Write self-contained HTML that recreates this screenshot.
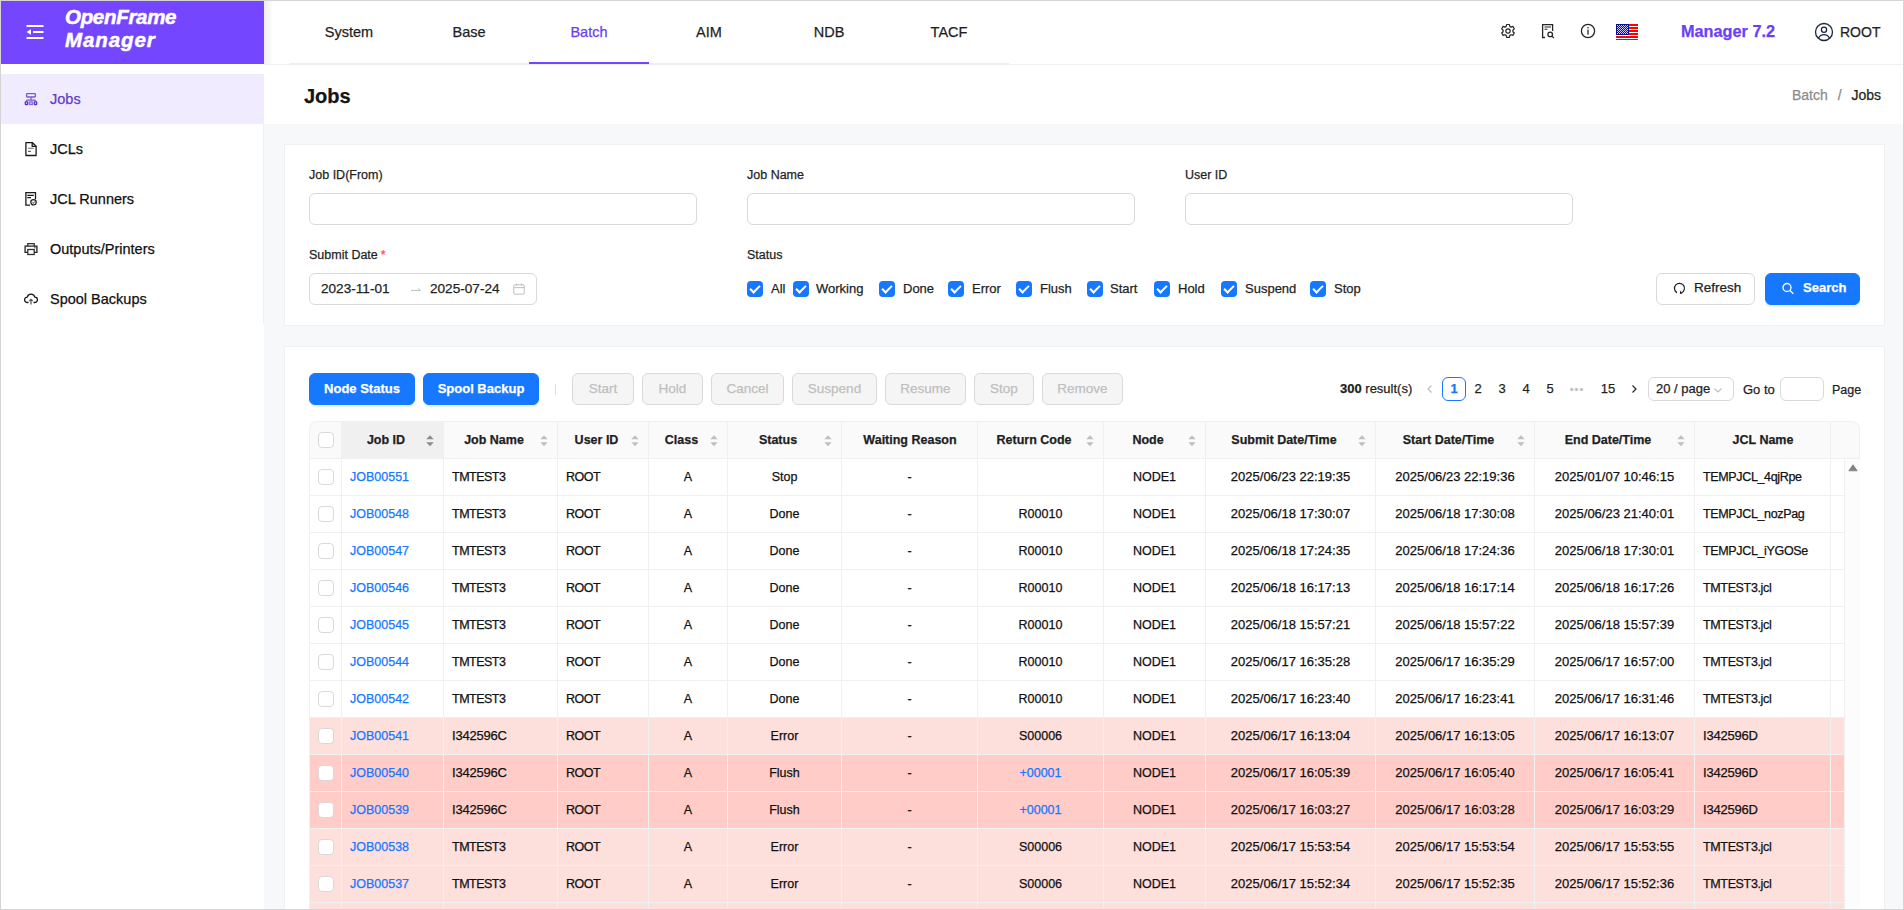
<!DOCTYPE html>
<html><head><meta charset="utf-8"><style>
*{box-sizing:border-box;margin:0;padding:0}
html,body{width:1904px;height:910px;overflow:hidden;background:#fff}
body{position:relative;font-family:"Liberation Sans",sans-serif;color:#1f1f1f;-webkit-text-stroke:0.25px currentColor}
#frame{position:absolute;left:0;top:0;width:1904px;height:910px;border:1px solid #d4d4d4;z-index:50;pointer-events:none}
.abs{position:absolute}
/* header */
#logo{position:absolute;left:1px;top:1px;width:263px;height:63px;background:#7546ff}
#hdrline{position:absolute;left:264px;top:64px;width:1639px;height:1px;background:#f0f0f0}
#shadow{position:absolute;left:264px;top:1px;width:9px;height:63px;background:linear-gradient(to right,#ededed,rgba(255,255,255,0))}
.tab{position:absolute;top:0;width:120px;height:63px;line-height:64px;text-align:center;font-size:14.5px;color:#1f1f1f}
.tab.on{color:#6a3ef0}
#tabline{position:absolute;left:289px;top:63px;width:720px;height:2px;background:#eeeeee}
#tabul{position:absolute;left:529px;top:62px;width:120px;height:2px;background:#7546ff}
/* sidebar */
#side{position:absolute;left:1px;top:65px;width:263px;height:259px}
#sideb{position:absolute;left:263px;top:74px;width:1px;height:250px;background:#f0f0f0}
.mi{position:absolute;left:0;width:262px;height:50px;font-size:14.5px;line-height:50px;color:#111}
.mi span{position:absolute;left:49px;top:0}
.mi svg{position:absolute;left:23px;top:18px}
.mi.on{background:#f0ebff;color:#5f3bcc}
/* content */
#content{position:absolute;left:264px;top:124px;width:1639px;height:786px;background:#f7f8fa}
#titlebar{position:absolute;left:264px;top:65px;width:1639px;height:59px;background:#fff}
.card{position:absolute;background:#fff;border:1px solid #eff0f1}
.lbl{position:absolute;font-size:12.5px;color:#1f1f1f;line-height:16px}
.inp{position:absolute;height:32px;border:1px solid #d9d9d9;border-radius:6px;background:#fff}
.cbx{position:absolute;width:16px;height:16px;border-radius:4px;background:#1677ff}
.cbx:after{content:"";position:absolute;left:5px;top:2px;width:4px;height:8px;border:solid #fff;border-width:0 2px 2px 0;transform:rotate(45deg)}
.cl{position:absolute;font-size:13px;line-height:16px;color:#1f1f1f}
.btn{position:absolute;height:32px;border-radius:6px;font-size:13px;line-height:30px;text-align:center}
.btn.pri{background:#1677ff;color:#fff;border:1px solid #1677ff;font-weight:bold;box-shadow:0 2px 0 rgba(5,145,255,.1)}
.btn.def{background:#fff;border:1px solid #d9d9d9;color:#1f1f1f}
.btn.dis{background:#f5f5f5;border:1px solid #d9d9d9;color:#bfbfbf;font-size:13.5px}
.pg{position:absolute;top:377px;height:24px;line-height:24px;font-size:13px;text-align:center;color:#1f1f1f}
/* table */
.thead,.tr{position:absolute;left:309px;height:38px;width:1550px}
.tr{height:37px;width:1535px}
.th{position:absolute;top:0;height:38px;background:#fafafa;border-left:1px solid #f0f0f0;border-top:1px solid #f0f0f0;border-bottom:1px solid #f0f0f0;font-weight:bold;font-size:12.5px}
.th.sorted{background:#f0f0f0}
.th .tt{position:absolute;left:9px;right:22px;top:0;line-height:36px;text-align:center;white-space:nowrap}
.th .tt.nos{right:8px}
.th .sorter{position:absolute;right:9px;top:13px}
.th.first{border-top-left-radius:8px}
.th.last{border-right:1px solid #f0f0f0;border-top-right-radius:8px}
.th .cb{position:absolute;left:8px;top:10px}
.td{position:absolute;top:0;height:37px;color:#111;border-left:1px solid #f0f0f0;border-bottom:1px solid #f0f0f0;font-size:12.5px;line-height:36px;white-space:nowrap;overflow:hidden}
.td.l{padding-left:8px}
.td.dt{font-size:13px}
.td.nm{letter-spacing:-0.5px}
.td.jn{letter-spacing:-0.35px}
.td.dg{font-size:13px;letter-spacing:-0.2px}
.td.c{text-align:center}
.td .cb{position:absolute;left:8px;top:10px}
.cb{display:inline-block;width:16px;height:16px;border:1px solid #d9d9d9;border-radius:4px;background:#fff}
.lnk{color:#1677ff}
.tr.err{background:#fddfdb}
.tr.flush{background:#ffccc7}
.tr.err .td,.tr.flush .td{border-color:#f0f0f0}
#sb{position:absolute;left:1844px;top:459px;width:16px;height:452px;background:#fcfcfc;border-left:1px solid #f0f0f0}

</style></head><body>
<div id="frame"></div>
<!-- header -->
<div id="logo">
  <svg class="abs" style="left:25px;top:23px" width="18" height="16" viewBox="0 0 18 16">
    <rect x="0.5" y="1" width="17" height="2" fill="#fff"/>
    <path d="M0.5 8 L5 5.3 L5 10.7 Z" fill="#fff"/>
    <rect x="7" y="7" width="10.5" height="2" fill="#fff"/>
    <rect x="0.5" y="13" width="17" height="2" fill="#fff"/>
  </svg>
  <div class="abs" style="left:64px;top:5.4px;color:#fff;font-weight:bold;font-style:italic;font-size:20.5px;line-height:22.7px;-webkit-text-stroke:0.5px #fff"><span style="letter-spacing:-0.3px">OpenFrame</span><br><span style="letter-spacing:0.9px">Manager</span></div>
</div>
<div id="shadow"></div>
<div id="hdrline"></div>
<div class="tab" style="left:289px">System</div>
<div class="tab" style="left:409px">Base</div>
<div class="tab on" style="left:529px">Batch</div>
<div class="tab" style="left:649px">AIM</div>
<div class="tab" style="left:769px">NDB</div>
<div class="tab" style="left:889px">TACF</div>
<div id="tabline"></div>
<div id="tabul"></div>

<!-- header right icons -->
<svg class="abs" style="left:1500px;top:23px" width="16" height="16" viewBox="0 0 16 16">
  <path d="M6.6 1.5h2.8l.4 1.9 1.3.7 1.8-.7 1.4 2.4-1.4 1.3v1.6l1.4 1.3-1.4 2.4-1.8-.7-1.3.7-.4 1.9H6.6l-.4-1.9-1.3-.7-1.8.7-1.4-2.4 1.4-1.3V7.1L1.7 5.8l1.4-2.4 1.8.7 1.3-.7z" fill="none" stroke="#262626" stroke-width="1.2" stroke-linejoin="round"/>
  <circle cx="8" cy="8" r="2.2" fill="none" stroke="#262626" stroke-width="1.2"/>
</svg>
<svg class="abs" style="left:1540px;top:23px" width="16" height="16" viewBox="0 0 16 16">
  <path d="M5 14.5H2.6V1.6h10v6.3" fill="none" stroke="#262626" stroke-width="1.3"/>
  <path d="M4.5 4h6.5M4.5 6.2h3" stroke="#262626" stroke-width="1.1"/>
  <circle cx="10.2" cy="11.4" r="2.3" fill="none" stroke="#262626" stroke-width="1.3"/>
  <path d="M11.9 13.1l2 2" stroke="#262626" stroke-width="1.3"/>
</svg>
<svg class="abs" style="left:1580px;top:23px" width="16" height="16" viewBox="0 0 16 16">
  <circle cx="8" cy="8" r="6.6" fill="none" stroke="#262626" stroke-width="1.3"/>
  <rect x="7.35" y="6.6" width="1.3" height="5" fill="#262626"/>
  <circle cx="8" cy="4.7" r="0.8" fill="#262626"/>
</svg>
<svg class="abs" style="left:1616px;top:24px" width="22" height="16" viewBox="0 0 22 16" shape-rendering="crispEdges"><rect x="0" y="0" width="22" height="16" fill="#fff"/><rect x="0" y="0" width="22" height="2" fill="#f00"/><rect x="0" y="3" width="22" height="2" fill="#f00"/><rect x="0" y="6" width="22" height="2" fill="#f00"/><rect x="0" y="9" width="22" height="2" fill="#f00"/><rect x="0" y="12" width="22" height="2" fill="#f00"/><rect x="0" y="15" width="22" height="1" fill="#f00"/><rect x="0" y="0" width="13" height="11" fill="#0c0c94"/><rect x="1" y="1" width="1" height="1" fill="#c8c8f0"/><rect x="3" y="1" width="1" height="1" fill="#c8c8f0"/><rect x="5" y="1" width="1" height="1" fill="#c8c8f0"/><rect x="7" y="1" width="1" height="1" fill="#c8c8f0"/><rect x="9" y="1" width="1" height="1" fill="#c8c8f0"/><rect x="11" y="1" width="1" height="1" fill="#c8c8f0"/><rect x="2" y="2" width="1" height="1" fill="#c8c8f0"/><rect x="4" y="2" width="1" height="1" fill="#c8c8f0"/><rect x="6" y="2" width="1" height="1" fill="#c8c8f0"/><rect x="8" y="2" width="1" height="1" fill="#c8c8f0"/><rect x="10" y="2" width="1" height="1" fill="#c8c8f0"/><rect x="1" y="3" width="1" height="1" fill="#c8c8f0"/><rect x="3" y="3" width="1" height="1" fill="#c8c8f0"/><rect x="5" y="3" width="1" height="1" fill="#c8c8f0"/><rect x="7" y="3" width="1" height="1" fill="#c8c8f0"/><rect x="9" y="3" width="1" height="1" fill="#c8c8f0"/><rect x="11" y="3" width="1" height="1" fill="#c8c8f0"/><rect x="2" y="4" width="1" height="1" fill="#c8c8f0"/><rect x="4" y="4" width="1" height="1" fill="#c8c8f0"/><rect x="6" y="4" width="1" height="1" fill="#c8c8f0"/><rect x="8" y="4" width="1" height="1" fill="#c8c8f0"/><rect x="10" y="4" width="1" height="1" fill="#c8c8f0"/><rect x="1" y="5" width="1" height="1" fill="#c8c8f0"/><rect x="3" y="5" width="1" height="1" fill="#c8c8f0"/><rect x="5" y="5" width="1" height="1" fill="#c8c8f0"/><rect x="7" y="5" width="1" height="1" fill="#c8c8f0"/><rect x="9" y="5" width="1" height="1" fill="#c8c8f0"/><rect x="11" y="5" width="1" height="1" fill="#c8c8f0"/><rect x="2" y="6" width="1" height="1" fill="#c8c8f0"/><rect x="4" y="6" width="1" height="1" fill="#c8c8f0"/><rect x="6" y="6" width="1" height="1" fill="#c8c8f0"/><rect x="8" y="6" width="1" height="1" fill="#c8c8f0"/><rect x="10" y="6" width="1" height="1" fill="#c8c8f0"/><rect x="1" y="7" width="1" height="1" fill="#c8c8f0"/><rect x="3" y="7" width="1" height="1" fill="#c8c8f0"/><rect x="5" y="7" width="1" height="1" fill="#c8c8f0"/><rect x="7" y="7" width="1" height="1" fill="#c8c8f0"/><rect x="9" y="7" width="1" height="1" fill="#c8c8f0"/><rect x="11" y="7" width="1" height="1" fill="#c8c8f0"/><rect x="2" y="8" width="1" height="1" fill="#c8c8f0"/><rect x="4" y="8" width="1" height="1" fill="#c8c8f0"/><rect x="6" y="8" width="1" height="1" fill="#c8c8f0"/><rect x="8" y="8" width="1" height="1" fill="#c8c8f0"/><rect x="10" y="8" width="1" height="1" fill="#c8c8f0"/><rect x="1" y="9" width="1" height="1" fill="#c8c8f0"/><rect x="3" y="9" width="1" height="1" fill="#c8c8f0"/><rect x="5" y="9" width="1" height="1" fill="#c8c8f0"/><rect x="7" y="9" width="1" height="1" fill="#c8c8f0"/><rect x="9" y="9" width="1" height="1" fill="#c8c8f0"/><rect x="11" y="9" width="1" height="1" fill="#c8c8f0"/></svg>
<div class="abs" style="left:1681px;top:21px;font-size:16.3px;line-height:20px;font-weight:bold;color:#6b3ff5">Manager 7.2</div>
<svg class="abs" style="left:1814px;top:22px" width="20" height="20" viewBox="0 0 20 20">
  <circle cx="10" cy="10" r="8.5" fill="none" stroke="#1c2541" stroke-width="1.3"/>
  <circle cx="10" cy="7.8" r="2.6" fill="none" stroke="#1c2541" stroke-width="1.3"/>
  <path d="M4.6 16.2c1-2.4 3-3.6 5.4-3.6s4.4 1.2 5.4 3.6" fill="none" stroke="#1c2541" stroke-width="1.3"/>
</svg>
<div class="abs" style="left:1840px;top:24px;font-size:14px;line-height:16px;color:#1f1f1f">ROOT</div>

<!-- sidebar -->
<div id="side">
  <div class="mi on" style="top:9px">
    <svg width="16" height="16" viewBox="0 0 16 16" style="top:17px">
      <rect x="2.6" y="2.7" width="8.8" height="3.3" rx="0.7" fill="none" stroke="#7a58d6" stroke-width="1.3"/>
      <path d="M7 6v3M2.5 9.2h9M2.5 9.2v1.4M11.5 9.2v1.4" stroke="#7a58d6" stroke-width="1.2" fill="none"/>
      <path d="M5 4.3h4.6" stroke="#fff" stroke-width="1" opacity="0.7"/>
      <rect x="1.3" y="10.9" width="2.5" height="2.6" rx="0.4" fill="none" stroke="#5530c4" stroke-width="1.3"/>
      <rect x="5.75" y="10.9" width="2.5" height="2.6" fill="none" stroke="#8a6ad8" stroke-width="1.3"/>
      <rect x="10.2" y="10.9" width="2.5" height="2.6" rx="0.4" fill="none" stroke="#5530c4" stroke-width="1.3"/>
    </svg>
    <span>Jobs</span>
  </div>
  <div class="mi" style="top:59px">
    <svg width="16" height="16" viewBox="0 0 16 16" style="top:17px">
      <path d="M1.9 1.7h6.6l3.6 3.6v9.2H1.9z" fill="none" stroke="#1a1a1a" stroke-width="1.3" stroke-linejoin="round"/>
      <path d="M8.2 1.7v3.6h3.9" fill="none" stroke="#1a1a1a" stroke-width="1.3"/>
      <path d="M4.2 7.3h5.5M4 10.4h3" stroke="#666" stroke-width="1.1"/>
    </svg>
    <span>JCLs</span>
  </div>
  <div class="mi" style="top:109px">
    <svg width="16" height="16" viewBox="0 0 16 16" style="top:17px">
      <path d="M6 14.2H1.9V1.7h9.6v6.5" fill="none" stroke="#1a1a1a" stroke-width="1.3"/>
      <path d="M3.3 4.4h6.5M3.3 6.6h3.7" stroke="#1a1a1a" stroke-width="1.1"/>
      <circle cx="9.5" cy="11.3" r="2.7" fill="none" stroke="#1a1a1a" stroke-width="1.2"/>
      <path d="M8.2 11.4l1 1 1.6-1.9" fill="none" stroke="#333" stroke-width="1"/>
    </svg>
    <span>JCL Runners</span>
  </div>
  <div class="mi" style="top:159px">
    <svg width="16" height="16" viewBox="0 0 16 16" style="top:17px">
      <path d="M3.8 5.3V2.6h6.4v2.7" fill="none" stroke="#333" stroke-width="1.3"/>
      <path d="M3.8 11.3H1.1V5.2h11.8v6.1h-2.7" fill="none" stroke="#222" stroke-width="1.3"/>
      <rect x="3.8" y="8.5" width="6.4" height="5" fill="none" stroke="#333" stroke-width="1.3"/>
      <circle cx="10.9" cy="6.8" r="0.7" fill="#333"/>
    </svg>
    <span>Outputs/Printers</span>
  </div>
  <div class="mi" style="top:209px">
    <svg width="16" height="16" viewBox="0 0 16 16" style="top:17px">
      <path d="M4 11.5H3.4A2.7 2.7 0 0 1 3.2 6.1 3.9 3.9 0 0 1 10.8 6.1 2.7 2.7 0 0 1 10.6 11.5H10" fill="none" stroke="#1a1a1a" stroke-width="1.3" stroke-linecap="round"/>
      <path d="M7 8.3v5.3M5.3 10l1.7-1.7 1.7 1.7" fill="none" stroke="#555" stroke-width="1.2"/>
    </svg>
    <span>Spool Backups</span>
  </div>
</div>
<div id="sideb"></div>
<!-- content -->
<div id="titlebar">
  <div class="abs" style="left:40px;top:19px;font-size:20px;line-height:24px;font-weight:bold;color:#141414">Jobs</div>
  <div class="abs" style="right:22px;top:22px;font-size:14px;line-height:16px;color:#8c8c8c;white-space:nowrap">Batch <span style="margin:0 6px">/</span> <span style="color:#1f1f1f">Jobs</span></div>
</div>
<div id="content"></div>

<!-- search card -->
<div class="card" style="left:284px;top:144px;width:1601px;height:182px"></div>
<div class="lbl" style="left:309px;top:167px">Job ID(From)</div>
<div class="lbl" style="left:747px;top:167px">Job Name</div>
<div class="lbl" style="left:1185px;top:167px">User ID</div>
<div class="inp" style="left:309px;top:193px;width:388px"></div>
<div class="inp" style="left:747px;top:193px;width:388px"></div>
<div class="inp" style="left:1185px;top:193px;width:388px"></div>
<div class="lbl" style="left:309px;top:247px">Submit Date<span style="color:#ff4d4f;margin-left:3px">*</span></div>
<div class="lbl" style="left:747px;top:247px">Status</div>
<div class="inp" style="left:309px;top:273px;width:228px">
  <div class="abs" style="left:11px;top:7px;font-size:13.6px;line-height:16px;color:#1f1f1f">2023-11-01</div>
  <svg class="abs" style="left:99px;top:9px" width="14" height="12" viewBox="0 0 14 12"><path d="M2 7.5h9.5l-2.3-2" fill="none" stroke="#bfbfbf" stroke-width="1"/></svg>
  <div class="abs" style="left:120px;top:7px;font-size:13.6px;line-height:16px;color:#1f1f1f">2025-07-24</div>
  <svg class="abs" style="left:203px;top:9px" width="12" height="12" viewBox="0 0 12 12"><rect x="0.8" y="1.8" width="10.4" height="9.4" rx="0.6" fill="none" stroke="#bfbfbf" stroke-width="1"/><path d="M0.8 4.6h10.4M3.5 0.5v2.3M8.5 0.5v2.3" stroke="#bfbfbf" stroke-width="1"/></svg>
</div>
<div class="cbx" style="left:747px;top:281px"></div><div class="cl" style="left:771px;top:281px">All</div>
<div class="cbx" style="left:793px;top:281px"></div><div class="cl" style="left:816px;top:281px">Working</div>
<div class="cbx" style="left:879px;top:281px"></div><div class="cl" style="left:903px;top:281px">Done</div>
<div class="cbx" style="left:948px;top:281px"></div><div class="cl" style="left:972px;top:281px">Error</div>
<div class="cbx" style="left:1016px;top:281px"></div><div class="cl" style="left:1040px;top:281px">Flush</div>
<div class="cbx" style="left:1087px;top:281px"></div><div class="cl" style="left:1110px;top:281px">Start</div>
<div class="cbx" style="left:1154px;top:281px"></div><div class="cl" style="left:1178px;top:281px">Hold</div>
<div class="cbx" style="left:1221px;top:281px"></div><div class="cl" style="left:1245px;top:281px">Suspend</div>
<div class="cbx" style="left:1310px;top:281px"></div><div class="cl" style="left:1334px;top:281px">Stop</div>
<div class="btn def" style="left:1656px;top:273px;width:99px">
  <svg class="abs" style="left:15px;top:8px" width="14" height="14" viewBox="0 0 14 14"><path d="M5 10.63A5 5 0 1 1 9.4 10.9" fill="none" stroke="#1f1f1f" stroke-width="1.2"/><path d="M8.2 8.6L10.4 11.4 7.9 12Z" fill="#1f1f1f"/></svg>
  <span class="abs" style="left:37px;top:-1px;font-size:13.5px">Refresh</span>
</div>
<div class="btn pri" style="left:1765px;top:273px;width:95px">
  <svg class="abs" style="left:15px;top:8px" width="14" height="14" viewBox="0 0 14 14"><circle cx="6" cy="5.5" r="4" fill="none" stroke="#fff" stroke-width="1.3"/><path d="M8.9 8.4l3.4 3.4" stroke="#fff" stroke-width="1.3"/></svg>
  <span class="abs" style="left:37px;top:-1px;font-size:13px">Search</span>
</div>

<!-- table card -->
<div class="card" style="left:284px;top:346px;width:1601px;height:600px"></div>
<div class="btn pri" style="left:309px;top:373px;width:106px">Node Status</div>
<div class="btn pri" style="left:423px;top:373px;width:116px">Spool Backup</div>
<div class="abs" style="left:555px;top:384px;width:1px;height:11px;background:#e0e0e0"></div>
<div class="btn dis" style="left:572px;top:373px;width:62px">Start</div>
<div class="btn dis" style="left:642px;top:373px;width:61px">Hold</div>
<div class="btn dis" style="left:711px;top:373px;width:73px">Cancel</div>
<div class="btn dis" style="left:792px;top:373px;width:85px">Suspend</div>
<div class="btn dis" style="left:885px;top:373px;width:81px">Resume</div>
<div class="btn dis" style="left:974px;top:373px;width:60px">Stop</div>
<div class="btn dis" style="left:1042px;top:373px;width:81px">Remove</div>

<div class="abs" style="left:1340px;top:381px;font-size:13px;line-height:16px;white-space:nowrap"><b>300</b> result(s)</div>
<svg class="abs" style="left:1425px;top:384px" width="10" height="10" viewBox="0 0 10 10"><path d="M6.5 1.5L3 5l3.5 3.5" fill="none" stroke="#bfbfbf" stroke-width="1.2"/></svg>
<div class="pg" style="left:1442px;width:24px;border:1px solid #1677ff;border-radius:6px;color:#1677ff;font-weight:bold;line-height:22px">1</div>
<div class="pg" style="left:1466px;width:24px">2</div>
<div class="pg" style="left:1490px;width:24px">3</div>
<div class="pg" style="left:1514px;width:24px">4</div>
<div class="pg" style="left:1538px;width:24px">5</div>
<div class="pg" style="left:1565px;width:24px;color:#bfbfbf;letter-spacing:1px;font-size:11px">•••</div>
<div class="pg" style="left:1596px;width:24px">15</div>
<svg class="abs" style="left:1629px;top:384px" width="10" height="10" viewBox="0 0 10 10"><path d="M3.5 1.5L7 5 3.5 8.5" fill="none" stroke="#262626" stroke-width="1.2"/></svg>
<div class="abs" style="left:1648px;top:377px;width:86px;height:24px;border:1px solid #d9d9d9;border-radius:6px">
  <span class="abs" style="left:7px;top:3px;font-size:13px;line-height:16px;white-space:nowrap">20 / page</span>
  <svg class="abs" style="left:64px;top:7px" width="10" height="10" viewBox="0 0 10 10"><path d="M1.5 3.5L5 7l3.5-3.5" fill="none" stroke="#bfbfbf" stroke-width="1.1"/></svg>
</div>
<div class="abs" style="left:1743px;top:382px;font-size:13px;line-height:16px">Go to</div>
<div class="abs" style="left:1780px;top:377px;width:44px;height:24px;border:1px solid #d9d9d9;border-radius:6px"></div>
<div class="abs" style="left:1832px;top:382px;font-size:12.5px;line-height:16px">Page</div>

<div class="thead" style="top:421px">
<div class="th first" style="left:0px;width:32px"><span class="cb"></span></div>
<div class="th sorted" style="left:32px;width:102px"><span class="tt">Job ID</span><svg class="sorter" width="8" height="12" viewBox="0 0 8 12"><path d="M4 0.3 L7.7 4.2 L0.3 4.2 Z" fill="#8c8c8c"/><path d="M0.3 7.3 L7.7 7.3 L4 11.3 Z" fill="#8c8c8c"/></svg></div>
<div class="th" style="left:134px;width:114px"><span class="tt">Job Name</span><svg class="sorter" width="8" height="12" viewBox="0 0 8 12"><path d="M4 0.3 L7.7 4.2 L0.3 4.2 Z" fill="#bfbfbf"/><path d="M0.3 7.3 L7.7 7.3 L4 11.3 Z" fill="#bfbfbf"/></svg></div>
<div class="th" style="left:248px;width:91px"><span class="tt">User ID</span><svg class="sorter" width="8" height="12" viewBox="0 0 8 12"><path d="M4 0.3 L7.7 4.2 L0.3 4.2 Z" fill="#bfbfbf"/><path d="M0.3 7.3 L7.7 7.3 L4 11.3 Z" fill="#bfbfbf"/></svg></div>
<div class="th" style="left:339px;width:79px"><span class="tt">Class</span><svg class="sorter" width="8" height="12" viewBox="0 0 8 12"><path d="M4 0.3 L7.7 4.2 L0.3 4.2 Z" fill="#bfbfbf"/><path d="M0.3 7.3 L7.7 7.3 L4 11.3 Z" fill="#bfbfbf"/></svg></div>
<div class="th" style="left:418px;width:114px"><span class="tt">Status</span><svg class="sorter" width="8" height="12" viewBox="0 0 8 12"><path d="M4 0.3 L7.7 4.2 L0.3 4.2 Z" fill="#bfbfbf"/><path d="M0.3 7.3 L7.7 7.3 L4 11.3 Z" fill="#bfbfbf"/></svg></div>
<div class="th" style="left:532px;width:136px"><span class="tt nos">Waiting Reason</span></div>
<div class="th" style="left:668px;width:126px"><span class="tt">Return Code</span><svg class="sorter" width="8" height="12" viewBox="0 0 8 12"><path d="M4 0.3 L7.7 4.2 L0.3 4.2 Z" fill="#bfbfbf"/><path d="M0.3 7.3 L7.7 7.3 L4 11.3 Z" fill="#bfbfbf"/></svg></div>
<div class="th" style="left:794px;width:102px"><span class="tt">Node</span><svg class="sorter" width="8" height="12" viewBox="0 0 8 12"><path d="M4 0.3 L7.7 4.2 L0.3 4.2 Z" fill="#bfbfbf"/><path d="M0.3 7.3 L7.7 7.3 L4 11.3 Z" fill="#bfbfbf"/></svg></div>
<div class="th" style="left:896px;width:170px"><span class="tt">Submit Date/Time</span><svg class="sorter" width="8" height="12" viewBox="0 0 8 12"><path d="M4 0.3 L7.7 4.2 L0.3 4.2 Z" fill="#bfbfbf"/><path d="M0.3 7.3 L7.7 7.3 L4 11.3 Z" fill="#bfbfbf"/></svg></div>
<div class="th" style="left:1066px;width:159px"><span class="tt">Start Date/Time</span><svg class="sorter" width="8" height="12" viewBox="0 0 8 12"><path d="M4 0.3 L7.7 4.2 L0.3 4.2 Z" fill="#bfbfbf"/><path d="M0.3 7.3 L7.7 7.3 L4 11.3 Z" fill="#bfbfbf"/></svg></div>
<div class="th" style="left:1225px;width:160px"><span class="tt">End Date/Time</span><svg class="sorter" width="8" height="12" viewBox="0 0 8 12"><path d="M4 0.3 L7.7 4.2 L0.3 4.2 Z" fill="#bfbfbf"/><path d="M0.3 7.3 L7.7 7.3 L4 11.3 Z" fill="#bfbfbf"/></svg></div>
<div class="th" style="left:1385px;width:136px"><span class="tt nos">JCL Name</span></div>
<div class="th last" style="left:1521px;width:30px"><span class="tt nos"></span></div>
</div>
<div class="tr " style="top:459px">
<div class="td c" style="left:0px;width:32px"><span class="cb"></span></div>
<div class="td l" style="left:32px;width:102px"><span class="lnk">JOB00551</span></div>
<div class="td l nm" style="left:134px;width:114px">TMTEST3</div>
<div class="td l nm" style="left:248px;width:91px">ROOT</div>
<div class="td c" style="left:339px;width:79px">A</div>
<div class="td c" style="left:418px;width:114px">Stop</div>
<div class="td c" style="left:532px;width:136px">-</div>
<div class="td c" style="left:668px;width:126px"></div>
<div class="td c" style="left:794px;width:102px">NODE1</div>
<div class="td c dt" style="left:896px;width:170px">2025/06/23 22:19:35</div>
<div class="td c dt" style="left:1066px;width:159px">2025/06/23 22:19:36</div>
<div class="td c dt" style="left:1225px;width:160px">2025/01/07 10:46:15</div>
<div class="td l jn" style="left:1385px;width:136px">TEMPJCL_4qjRpe</div>
<div class="td l" style="left:1521px;width:14px"></div>
</div>
<div class="tr " style="top:496px">
<div class="td c" style="left:0px;width:32px"><span class="cb"></span></div>
<div class="td l" style="left:32px;width:102px"><span class="lnk">JOB00548</span></div>
<div class="td l nm" style="left:134px;width:114px">TMTEST3</div>
<div class="td l nm" style="left:248px;width:91px">ROOT</div>
<div class="td c" style="left:339px;width:79px">A</div>
<div class="td c" style="left:418px;width:114px">Done</div>
<div class="td c" style="left:532px;width:136px">-</div>
<div class="td c" style="left:668px;width:126px">R00010</div>
<div class="td c" style="left:794px;width:102px">NODE1</div>
<div class="td c dt" style="left:896px;width:170px">2025/06/18 17:30:07</div>
<div class="td c dt" style="left:1066px;width:159px">2025/06/18 17:30:08</div>
<div class="td c dt" style="left:1225px;width:160px">2025/06/23 21:40:01</div>
<div class="td l jn" style="left:1385px;width:136px">TEMPJCL_nozPag</div>
<div class="td l" style="left:1521px;width:14px"></div>
</div>
<div class="tr " style="top:533px">
<div class="td c" style="left:0px;width:32px"><span class="cb"></span></div>
<div class="td l" style="left:32px;width:102px"><span class="lnk">JOB00547</span></div>
<div class="td l nm" style="left:134px;width:114px">TMTEST3</div>
<div class="td l nm" style="left:248px;width:91px">ROOT</div>
<div class="td c" style="left:339px;width:79px">A</div>
<div class="td c" style="left:418px;width:114px">Done</div>
<div class="td c" style="left:532px;width:136px">-</div>
<div class="td c" style="left:668px;width:126px">R00010</div>
<div class="td c" style="left:794px;width:102px">NODE1</div>
<div class="td c dt" style="left:896px;width:170px">2025/06/18 17:24:35</div>
<div class="td c dt" style="left:1066px;width:159px">2025/06/18 17:24:36</div>
<div class="td c dt" style="left:1225px;width:160px">2025/06/18 17:30:01</div>
<div class="td l jn" style="left:1385px;width:136px">TEMPJCL_iYGOSe</div>
<div class="td l" style="left:1521px;width:14px"></div>
</div>
<div class="tr " style="top:570px">
<div class="td c" style="left:0px;width:32px"><span class="cb"></span></div>
<div class="td l" style="left:32px;width:102px"><span class="lnk">JOB00546</span></div>
<div class="td l nm" style="left:134px;width:114px">TMTEST3</div>
<div class="td l nm" style="left:248px;width:91px">ROOT</div>
<div class="td c" style="left:339px;width:79px">A</div>
<div class="td c" style="left:418px;width:114px">Done</div>
<div class="td c" style="left:532px;width:136px">-</div>
<div class="td c" style="left:668px;width:126px">R00010</div>
<div class="td c" style="left:794px;width:102px">NODE1</div>
<div class="td c dt" style="left:896px;width:170px">2025/06/18 16:17:13</div>
<div class="td c dt" style="left:1066px;width:159px">2025/06/18 16:17:14</div>
<div class="td c dt" style="left:1225px;width:160px">2025/06/18 16:17:26</div>
<div class="td l jn" style="left:1385px;width:136px">TMTEST3.jcl</div>
<div class="td l" style="left:1521px;width:14px"></div>
</div>
<div class="tr " style="top:607px">
<div class="td c" style="left:0px;width:32px"><span class="cb"></span></div>
<div class="td l" style="left:32px;width:102px"><span class="lnk">JOB00545</span></div>
<div class="td l nm" style="left:134px;width:114px">TMTEST3</div>
<div class="td l nm" style="left:248px;width:91px">ROOT</div>
<div class="td c" style="left:339px;width:79px">A</div>
<div class="td c" style="left:418px;width:114px">Done</div>
<div class="td c" style="left:532px;width:136px">-</div>
<div class="td c" style="left:668px;width:126px">R00010</div>
<div class="td c" style="left:794px;width:102px">NODE1</div>
<div class="td c dt" style="left:896px;width:170px">2025/06/18 15:57:21</div>
<div class="td c dt" style="left:1066px;width:159px">2025/06/18 15:57:22</div>
<div class="td c dt" style="left:1225px;width:160px">2025/06/18 15:57:39</div>
<div class="td l jn" style="left:1385px;width:136px">TMTEST3.jcl</div>
<div class="td l" style="left:1521px;width:14px"></div>
</div>
<div class="tr " style="top:644px">
<div class="td c" style="left:0px;width:32px"><span class="cb"></span></div>
<div class="td l" style="left:32px;width:102px"><span class="lnk">JOB00544</span></div>
<div class="td l nm" style="left:134px;width:114px">TMTEST3</div>
<div class="td l nm" style="left:248px;width:91px">ROOT</div>
<div class="td c" style="left:339px;width:79px">A</div>
<div class="td c" style="left:418px;width:114px">Done</div>
<div class="td c" style="left:532px;width:136px">-</div>
<div class="td c" style="left:668px;width:126px">R00010</div>
<div class="td c" style="left:794px;width:102px">NODE1</div>
<div class="td c dt" style="left:896px;width:170px">2025/06/17 16:35:28</div>
<div class="td c dt" style="left:1066px;width:159px">2025/06/17 16:35:29</div>
<div class="td c dt" style="left:1225px;width:160px">2025/06/17 16:57:00</div>
<div class="td l jn" style="left:1385px;width:136px">TMTEST3.jcl</div>
<div class="td l" style="left:1521px;width:14px"></div>
</div>
<div class="tr " style="top:681px">
<div class="td c" style="left:0px;width:32px"><span class="cb"></span></div>
<div class="td l" style="left:32px;width:102px"><span class="lnk">JOB00542</span></div>
<div class="td l nm" style="left:134px;width:114px">TMTEST3</div>
<div class="td l nm" style="left:248px;width:91px">ROOT</div>
<div class="td c" style="left:339px;width:79px">A</div>
<div class="td c" style="left:418px;width:114px">Done</div>
<div class="td c" style="left:532px;width:136px">-</div>
<div class="td c" style="left:668px;width:126px">R00010</div>
<div class="td c" style="left:794px;width:102px">NODE1</div>
<div class="td c dt" style="left:896px;width:170px">2025/06/17 16:23:40</div>
<div class="td c dt" style="left:1066px;width:159px">2025/06/17 16:23:41</div>
<div class="td c dt" style="left:1225px;width:160px">2025/06/17 16:31:46</div>
<div class="td l jn" style="left:1385px;width:136px">TMTEST3.jcl</div>
<div class="td l" style="left:1521px;width:14px"></div>
</div>
<div class="tr err" style="top:718px">
<div class="td c" style="left:0px;width:32px"><span class="cb"></span></div>
<div class="td l" style="left:32px;width:102px"><span class="lnk">JOB00541</span></div>
<div class="td l dg" style="left:134px;width:114px">I342596C</div>
<div class="td l nm" style="left:248px;width:91px">ROOT</div>
<div class="td c" style="left:339px;width:79px">A</div>
<div class="td c" style="left:418px;width:114px">Error</div>
<div class="td c" style="left:532px;width:136px">-</div>
<div class="td c" style="left:668px;width:126px">S00006</div>
<div class="td c" style="left:794px;width:102px">NODE1</div>
<div class="td c dt" style="left:896px;width:170px">2025/06/17 16:13:04</div>
<div class="td c dt" style="left:1066px;width:159px">2025/06/17 16:13:05</div>
<div class="td c dt" style="left:1225px;width:160px">2025/06/17 16:13:07</div>
<div class="td l dg" style="left:1385px;width:136px">I342596D</div>
<div class="td l" style="left:1521px;width:14px"></div>
</div>
<div class="tr flush" style="top:755px">
<div class="td c" style="left:0px;width:32px"><span class="cb"></span></div>
<div class="td l" style="left:32px;width:102px"><span class="lnk">JOB00540</span></div>
<div class="td l dg" style="left:134px;width:114px">I342596C</div>
<div class="td l nm" style="left:248px;width:91px">ROOT</div>
<div class="td c" style="left:339px;width:79px">A</div>
<div class="td c" style="left:418px;width:114px">Flush</div>
<div class="td c" style="left:532px;width:136px">-</div>
<div class="td c" style="left:668px;width:126px"><span class="lnk">+00001</span></div>
<div class="td c" style="left:794px;width:102px">NODE1</div>
<div class="td c dt" style="left:896px;width:170px">2025/06/17 16:05:39</div>
<div class="td c dt" style="left:1066px;width:159px">2025/06/17 16:05:40</div>
<div class="td c dt" style="left:1225px;width:160px">2025/06/17 16:05:41</div>
<div class="td l dg" style="left:1385px;width:136px">I342596D</div>
<div class="td l" style="left:1521px;width:14px"></div>
</div>
<div class="tr flush" style="top:792px">
<div class="td c" style="left:0px;width:32px"><span class="cb"></span></div>
<div class="td l" style="left:32px;width:102px"><span class="lnk">JOB00539</span></div>
<div class="td l dg" style="left:134px;width:114px">I342596C</div>
<div class="td l nm" style="left:248px;width:91px">ROOT</div>
<div class="td c" style="left:339px;width:79px">A</div>
<div class="td c" style="left:418px;width:114px">Flush</div>
<div class="td c" style="left:532px;width:136px">-</div>
<div class="td c" style="left:668px;width:126px"><span class="lnk">+00001</span></div>
<div class="td c" style="left:794px;width:102px">NODE1</div>
<div class="td c dt" style="left:896px;width:170px">2025/06/17 16:03:27</div>
<div class="td c dt" style="left:1066px;width:159px">2025/06/17 16:03:28</div>
<div class="td c dt" style="left:1225px;width:160px">2025/06/17 16:03:29</div>
<div class="td l dg" style="left:1385px;width:136px">I342596D</div>
<div class="td l" style="left:1521px;width:14px"></div>
</div>
<div class="tr err" style="top:829px">
<div class="td c" style="left:0px;width:32px"><span class="cb"></span></div>
<div class="td l" style="left:32px;width:102px"><span class="lnk">JOB00538</span></div>
<div class="td l nm" style="left:134px;width:114px">TMTEST3</div>
<div class="td l nm" style="left:248px;width:91px">ROOT</div>
<div class="td c" style="left:339px;width:79px">A</div>
<div class="td c" style="left:418px;width:114px">Error</div>
<div class="td c" style="left:532px;width:136px">-</div>
<div class="td c" style="left:668px;width:126px">S00006</div>
<div class="td c" style="left:794px;width:102px">NODE1</div>
<div class="td c dt" style="left:896px;width:170px">2025/06/17 15:53:54</div>
<div class="td c dt" style="left:1066px;width:159px">2025/06/17 15:53:54</div>
<div class="td c dt" style="left:1225px;width:160px">2025/06/17 15:53:55</div>
<div class="td l jn" style="left:1385px;width:136px">TMTEST3.jcl</div>
<div class="td l" style="left:1521px;width:14px"></div>
</div>
<div class="tr err" style="top:866px">
<div class="td c" style="left:0px;width:32px"><span class="cb"></span></div>
<div class="td l" style="left:32px;width:102px"><span class="lnk">JOB00537</span></div>
<div class="td l nm" style="left:134px;width:114px">TMTEST3</div>
<div class="td l nm" style="left:248px;width:91px">ROOT</div>
<div class="td c" style="left:339px;width:79px">A</div>
<div class="td c" style="left:418px;width:114px">Error</div>
<div class="td c" style="left:532px;width:136px">-</div>
<div class="td c" style="left:668px;width:126px">S00006</div>
<div class="td c" style="left:794px;width:102px">NODE1</div>
<div class="td c dt" style="left:896px;width:170px">2025/06/17 15:52:34</div>
<div class="td c dt" style="left:1066px;width:159px">2025/06/17 15:52:35</div>
<div class="td c dt" style="left:1225px;width:160px">2025/06/17 15:52:36</div>
<div class="td l jn" style="left:1385px;width:136px">TMTEST3.jcl</div>
<div class="td l" style="left:1521px;width:14px"></div>
</div>
<div class="tr err" style="top:903px">
<div class="td c" style="left:0px;width:32px"><span class="cb"></span></div>
<div class="td l" style="left:32px;width:102px"><span class="lnk">JOB00536</span></div>
<div class="td l nm" style="left:134px;width:114px">TMTEST3</div>
<div class="td l nm" style="left:248px;width:91px">ROOT</div>
<div class="td c" style="left:339px;width:79px">A</div>
<div class="td c" style="left:418px;width:114px">Error</div>
<div class="td c" style="left:532px;width:136px">-</div>
<div class="td c" style="left:668px;width:126px">S00006</div>
<div class="td c" style="left:794px;width:102px">NODE1</div>
<div class="td c dt" style="left:896px;width:170px"></div>
<div class="td c dt" style="left:1066px;width:159px"></div>
<div class="td c dt" style="left:1225px;width:160px"></div>
<div class="td l jn" style="left:1385px;width:136px"></div>
<div class="td l" style="left:1521px;width:14px"></div>
</div>
<div id="sb">
  <svg class="abs" style="left:3px;top:5px" width="10" height="8" viewBox="0 0 10 8"><path d="M5 0.8L9.2 6.8H0.8Z" fill="#808080" stroke="#808080" stroke-width="0.8" stroke-linejoin="round"/></svg>
</div>

</body></html>
